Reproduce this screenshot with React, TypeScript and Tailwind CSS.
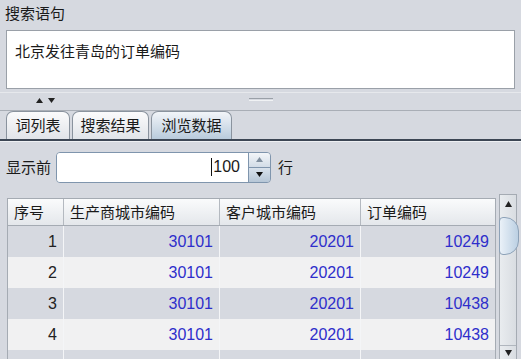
import React from 'react'

const FONT = { fontFamily: '"Noto Sans CJK SC", "Liberation Sans", sans-serif' }
const NUM = { fontFamily: '"Liberation Sans", Arial, sans-serif' }

const rows = [
  { n: 1, a: '30101', b: '20201', c: '10249' },
  { n: 2, a: '30101', b: '20201', c: '10249' },
  { n: 3, a: '30101', b: '20201', c: '10438' },
  { n: 4, a: '30101', b: '20201', c: '10438' },
]

function Tab({ label, width, active }: { label: string; width: string; active?: boolean }) {
  return (
    <div
      className={
        width +
        ' h-[28px] flex items-center justify-center rounded-t-[7px] border border-b-0 border-[#8a939e] text-[15px] text-[#1a1a1a] ' +
        (active
          ? 'bg-gradient-to-b from-[#f2f5f9] to-[#b9cbdc]'
          : 'bg-gradient-to-b from-[#fbfbfc] to-[#e1e4e9]')
      }
    >
      {label}
    </div>
  )
}

export default function App() {
  return (
    <div className="w-[521px] h-[359px] overflow-hidden bg-[#d6d9e0] text-[#1a1a1a]" style={FONT}>
      {/* query label */}
      <div className="h-[30px] pl-[5px] pt-[2px] text-[15px] leading-[22px]">搜索语句</div>

      {/* query box */}
      <div className="mx-[6px] h-[59px] bg-white border border-[#9aa0a8] px-[8px] pt-[9px] text-[15px] leading-[22px]">
        北京发往青岛的订单编码
      </div>

      {/* splitter */}
      <div className="h-[19px] mt-[3px] border-t border-[#e6e8ec] border-b border-b-[#a9aeb6] relative">
        <div className="absolute left-[36px] top-[5px] flex gap-[5px]">
          <svg width="7" height="5" viewBox="0 0 7 5">
            <path d="M0 5 L3.5 0 L7 5 Z" fill="#222" />
          </svg>
          <svg width="7" height="5" viewBox="0 0 7 5">
            <path d="M0 0 L3.5 5 L7 0 Z" fill="#222" />
          </svg>
        </div>
        <div className="absolute left-[249px] top-[5px] w-[24px] h-[3px] border-t border-[#9aa0a8] border-b border-b-[#f0f2f4]" />
      </div>

      {/* tabs */}
      <div className="pl-[6px] flex items-end">
        <Tab label="词列表" width="w-[64px]" />
        <div className="w-[2px]" />
        <Tab label="搜索结果" width="w-[77px]" />
        <div className="w-[2px]" />
        <Tab label="浏览数据" width="w-[81px]" active />
      </div>
      <div className="h-[2px] bg-[#3c4654]" />
      <div className="h-[1px] bg-[#eef0f3]" />

      {/* show first N rows */}
      <div className="h-[50px] flex items-center pl-[6px]">
        <span className="text-[15px] w-[50px]">显示前</span>
        <div className="flex h-[31px] rounded-[4px] border border-[#7f95ad] overflow-hidden">
          <div className="w-[191px] bg-white flex items-center justify-end pr-[8px] text-[16px]" style={NUM}>
            <span className="w-px h-[18px] bg-[#111] mr-[1px]" />
            100
          </div>
          <div className="w-[22px] flex flex-col border-l border-[#7f95ad]">
            <div className="flex-1 flex items-center justify-center bg-gradient-to-b from-[#f3f6f9] to-[#d2dce7] border-b border-[#7f95ad]">
              <svg width="7" height="5" viewBox="0 0 7 5">
                <path d="M0 5 L3.5 0 L7 5 Z" fill="#8190a0" />
              </svg>
            </div>
            <div className="flex-1 flex items-center justify-center bg-gradient-to-b from-[#d9e2ec] to-[#b6c6d6]">
              <svg width="7" height="5" viewBox="0 0 7 5">
                <path d="M0 0 L3.5 5 L7 0 Z" fill="#111" />
              </svg>
            </div>
          </div>
        </div>
        <span className="text-[15px] ml-[7px]">行</span>
      </div>

      {/* table + scrollbar */}
      <div className="flex pl-[7px] pt-[6px]">
        <div className="w-[489px] border border-[#a5abb3] border-b-0">
          <div className="grid grid-cols-[56px_156px_141px_134px] h-[27px] bg-gradient-to-b from-[#fafbfc] to-[#e4e7eb] border-b border-[#a5abb3] text-[15px]">
            {['序号', '生产商城市编码', '客户城市编码', '订单编码'].map((h, i) => (
              <div
                key={h}
                className={'flex items-center pl-[6px] ' + (i < 3 ? 'border-r border-[#b4b9c0]' : '')}
              >
                {h}
              </div>
            ))}
          </div>
          {rows.map((r, idx) => (
            <div
              key={r.n}
              className={
                'grid grid-cols-[56px_156px_141px_134px] h-[31px] text-[16px] ' +
                (idx % 2 === 0 ? 'bg-[#d6d9e0]' : 'bg-[#f1f1f2]')
              }
              style={NUM}
            >
              <div className="flex items-center justify-end pr-[6px] border-r border-[#f4f5f7] text-[#222]">{r.n}</div>
              <div className="flex items-center justify-end pr-[6px] border-r border-[#f4f5f7] text-[#2e2ecb]">{r.a}</div>
              <div className="flex items-center justify-end pr-[6px] border-r border-[#f4f5f7] text-[#2e2ecb]">{r.b}</div>
              <div className="flex items-center justify-end pr-[6px] text-[#2e2ecb]">{r.c}</div>
            </div>
          ))}
          {/* next row, clipped by the window */}
          <div className="grid grid-cols-[56px_156px_141px_134px] h-[31px] bg-[#d6d9e0]">
            <div className="border-r border-[#f4f5f7]" />
            <div className="border-r border-[#f4f5f7]" />
            <div className="border-r border-[#f4f5f7]" />
            <div />
          </div>
        </div>

        {/* vertical scrollbar */}
        <div className="ml-[3px] -mt-[4px] w-[18px] h-[166px] border border-[#a5abb3] bg-gradient-to-r from-[#e9ecef] to-[#d9dde2] flex flex-col relative">
          <div className="h-[18px] flex items-center justify-center">
            <svg width="7" height="6" viewBox="0 0 7 6">
              <path d="M0 6 L3.5 0 L7 6 Z" fill="#222" />
            </svg>
          </div>
          <div className="absolute left-[-1px] top-[22px] w-[20px] h-[38px] rounded-l-[4px] rounded-r-[14px] border border-[#8da2b8] bg-gradient-to-r from-[#eaf1f8] to-[#bcd0e3]" />
          <div className="flex-1" />
          <div className="h-[14px] flex items-center justify-center border-t border-[#b0b6be]">
            <svg width="7" height="6" viewBox="0 0 7 6">
              <path d="M0 0 L3.5 6 L7 0 Z" fill="#222" />
            </svg>
          </div>
        </div>
      </div>
    </div>
  )
}
